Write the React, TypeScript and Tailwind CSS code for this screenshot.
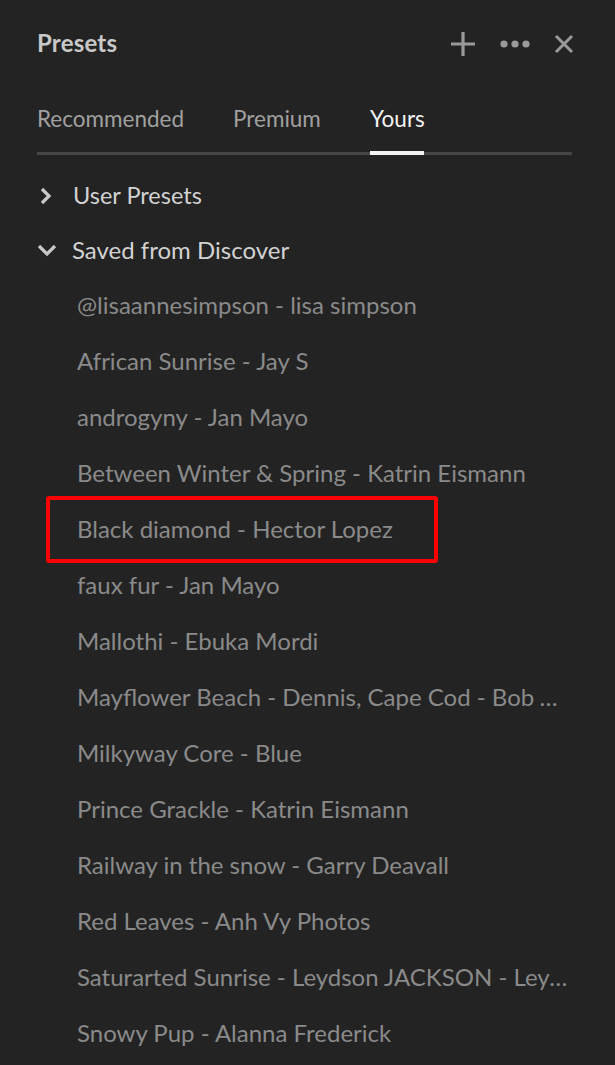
import React from "react";

const items = [
  "@lisaannesimpson - lisa simpson",
  "African Sunrise - Jay S",
  "androgyny - Jan Mayo",
  "Between Winter & Spring - Katrin Eismann",
  "Black diamond - Hector Lopez",
  "faux fur - Jan Mayo",
  "Mallothi - Ebuka Mordi",
  "Mayflower Beach - Dennis, Cape Cod - Bob Adams",
  "Milkyway Core - Blue",
  "Prince Grackle - Katrin Eismann",
  "Railway in the snow - Garry Deavall",
  "Red Leaves - Anh Vy Photos",
  "Saturarted Sunrise - Leydson JACKSON - Leydson",
  "Snowy Pup - Alanna Frederick",
];

export default function App() {
  return (
    <div
      className="w-[615px] h-[1065px] bg-[#232323] overflow-hidden"
      style={{ fontFamily: "Lato, 'Open Sans', sans-serif" }}
    >
      <div className="pl-[37px] pr-[43px]">
        <div className="h-[88px] flex items-center justify-between">
          <div className="text-[24px] font-bold text-[#c8c8c8] tracking-[0.2px] mt-[-2px]">Presets</div>
          <div className="flex items-center gap-[24px] text-[#9a9a9a] mr-[-2px]">
            <svg width="26" height="26" viewBox="0 0 26 26">
              <path d="M13 1v24M1 13h24" stroke="#9a9a9a" strokeWidth="3.2" />
            </svg>
            <svg width="30" height="8" viewBox="0 0 30 8">
              <circle cx="4" cy="4" r="3.6" fill="#9a9a9a" />
              <circle cx="15" cy="4" r="3.6" fill="#9a9a9a" />
              <circle cx="26" cy="4" r="3.6" fill="#9a9a9a" />
            </svg>
            <svg width="20" height="20" viewBox="0 0 20 20">
              <path d="M2 2l16 16M18 2L2 18" stroke="#9a9a9a" strokeWidth="3" />
            </svg>
          </div>
        </div>
        <div className="relative h-[69px]">
          <div className="flex items-center h-[62px] text-[22.5px] text-[#a0a0a0]">
            <div className="w-[196px]">Recommended</div>
            <div className="w-[137px]">Premium</div>
            <div className="text-[#f2f2f2]">Yours</div>
          </div>
          <div className="absolute left-0 right-0 top-[64px] h-[3px] bg-[#464646]" />
          <div className="absolute left-[333px] w-[54px] top-[63px] h-[4px] bg-[#f4f4f4]" />
        </div>
        <div className="mt-[12px]">
          <div className="h-[54px] flex items-center text-[23.5px] text-[#d2d2d2]">
            <svg width="14" height="20" viewBox="0 0 14 20" className="ml-[2px] mr-[20px]">
              <path d="M3 3l7 7-7 7" stroke="#c8c8c8" strokeWidth="3.2" fill="none" />
            </svg>
            User Presets
          </div>
          <div className="h-[54px] flex items-center text-[24px] text-[#d2d2d2]">
            <svg width="20" height="14" viewBox="0 0 20 14" className="mr-[15px]">
              <path d="M2 3l8 8 8-8" stroke="#c8c8c8" strokeWidth="3.2" fill="none" />
            </svg>
            Saved from Discover
          </div>
          <div className="pl-[40px]">
            {items.map((t, i) => (
              <div
                key={i}
                className="relative h-[56px] flex items-center text-[24px] text-[#8a8a8a] whitespace-nowrap overflow-visible"
              >
                <span className="block max-w-[496px] overflow-hidden text-ellipsis whitespace-nowrap">{t}</span>
                {t.startsWith("Black diamond") && (
                  <div className="absolute left-[-31px] top-[-5px] w-[392px] h-[67px] border-[4px] border-[#ff0000] rounded-[3px]" />
                )}
              </div>
            ))}
          </div>
        </div>
      </div>
    </div>
  );
}
